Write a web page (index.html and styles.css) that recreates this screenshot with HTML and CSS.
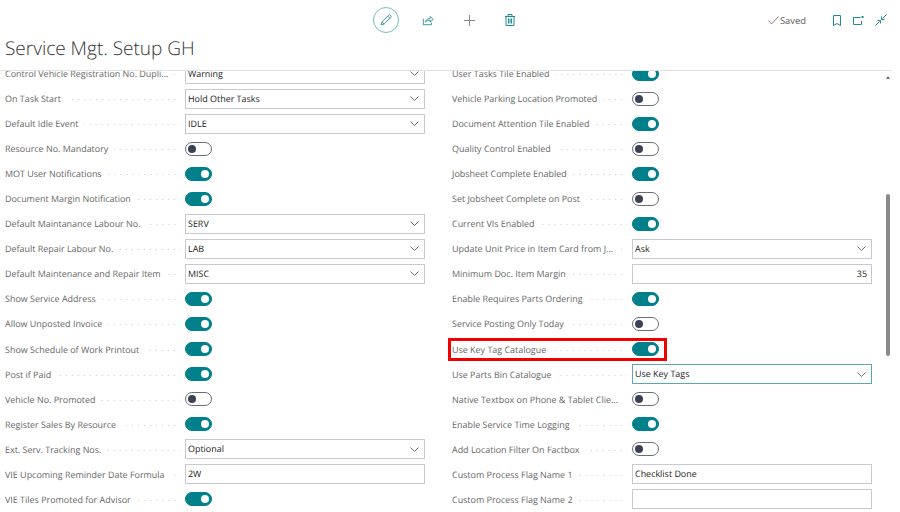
FILE: index.html
```html
<!DOCTYPE html>
<html lang="en">
<head>
<meta charset="utf-8">
<title>Service Mgt. Setup GH</title>
<link rel="stylesheet" href="styles.css">
</head>
<body>
<div class="page">
  <div class="actions">
    <div class="actions-center">
      <button class="edit-btn"><svg width="14" height="14" viewBox="0 0 16 16" class="ic"><path d="M2.5 13.5l.9-3.4 7.6-7.6a1.4 1.4 0 0 1 2 0l.5.5a1.4 1.4 0 0 1 0 2l-7.600 7.600zM3.400 10.100l2.500 2.500M10 3.500l2.500 2.500"/></svg></button>
      <svg width="12" height="12" viewBox="0 0 14 14" class="ic"><path d="M1.500 5.500v7h9.500v-2.500M4 9.500c.5-2.500 2.500-4.200 5.500-4.200V3l3.500 3.200-3.500 3.200V7.200c-2 0-4 .8-5.500 2.300z"/></svg>
      <svg width="11" height="11" viewBox="0 0 11 11" class="ic-grey"><path d="M5.500 0v11M0 5.500h11"/></svg>
      <svg width="10" height="12" viewBox="0 0 10 12" class="ic"><path d="M0 2.500h10M3 2.500V.5h4v2M1 2.500v9h8v-9M3.500 4.500v5M5 4.500v5M6.500 4.500v5"/></svg>
    </div>
    <div class="actions-right">
      <span class="saved"><svg width="11" height="9" viewBox="0 0 11 9" class="ic-grey"><path d="M.5 4.500l3 3.500 7-7.500"/></svg>Saved</span>
      <svg width="8" height="11" viewBox="0 0 8 11" class="ic"><path d="M.5.5h7v10L4 8.500.5 10.500z"/></svg>
      <svg width="11" height="9" viewBox="0 0 11 9" class="ic"><path d="M7.500 1.500H.5v7h8V5"/><path class="fill" d="M8.500 0h2v2h-2z"/></svg>
      <svg width="12" height="12" viewBox="0 0 12 12" class="ic"><path d="M.5 11.500l4-4M7.500 4.500l4-4M2.500 6.500h3v3M6.500 2.500v3h3"/></svg>
    </div>
  </div>
  <h1 class="title">Service Mgt. Setup GH</h1>
  <main class="scroller">
    <div class="form">
      <div class="col">
        <div class="row"><div class="caption"><span class="label">Control Vehicle Registration No. Dupli...</span><i class="dots"></i></div><div class="field select">Warning</div></div>
        <div class="row"><div class="caption"><span class="label">On Task Start</span><i class="dots"></i></div><div class="field select">Hold Other Tasks</div></div>
        <div class="row"><div class="caption"><span class="label">Default Idle Event</span><i class="dots"></i></div><div class="field select">IDLE</div></div>
        <div class="row"><div class="caption"><span class="label">Resource No. Mandatory</span><i class="dots"></i></div><span class="toggle"></span></div>
        <div class="row"><div class="caption"><span class="label">MOT User Notifications</span><i class="dots"></i></div><span class="toggle on"></span></div>
        <div class="row"><div class="caption"><span class="label">Document Margin Notification</span><i class="dots"></i></div><span class="toggle on"></span></div>
        <div class="row"><div class="caption"><span class="label">Default Maintanance Labour No.</span><i class="dots"></i></div><div class="field select">SERV</div></div>
        <div class="row"><div class="caption"><span class="label">Default Repair Labour No.</span><i class="dots"></i></div><div class="field select">LAB</div></div>
        <div class="row"><div class="caption"><span class="label">Default Maintenance and Repair Item</span><i class="dots"></i></div><div class="field select">MISC</div></div>
        <div class="row"><div class="caption"><span class="label">Show Service Address</span><i class="dots"></i></div><span class="toggle on"></span></div>
        <div class="row"><div class="caption"><span class="label">Allow Unposted Invoice</span><i class="dots"></i></div><span class="toggle on"></span></div>
        <div class="row"><div class="caption"><span class="label">Show Schedule of Work Printout</span><i class="dots"></i></div><span class="toggle on"></span></div>
        <div class="row"><div class="caption"><span class="label">Post if Paid</span><i class="dots"></i></div><span class="toggle on"></span></div>
        <div class="row"><div class="caption"><span class="label">Vehicle No. Promoted</span><i class="dots"></i></div><span class="toggle"></span></div>
        <div class="row"><div class="caption"><span class="label">Register Sales By Resource</span><i class="dots"></i></div><span class="toggle on"></span></div>
        <div class="row"><div class="caption"><span class="label">Ext. Serv. Tracking Nos.</span><i class="dots"></i></div><div class="field select">Optional</div></div>
        <div class="row"><div class="caption"><span class="label">VIE Upcoming Reminder Date Formula</span><i class="dots"></i></div><div class="field">2W</div></div>
        <div class="row"><div class="caption"><span class="label">VIE Tiles Promoted for Advisor</span><i class="dots"></i></div><span class="toggle on"></span></div>
      </div>
      <div class="col">
        <div class="row"><div class="caption"><span class="label">User Tasks Tile Enabled</span><i class="dots"></i></div><span class="toggle on"></span></div>
        <div class="row"><div class="caption"><span class="label">Vehicle Parking Location Promoted</span><i class="dots"></i></div><span class="toggle"></span></div>
        <div class="row"><div class="caption"><span class="label">Document Attention Tile Enabled</span><i class="dots"></i></div><span class="toggle on"></span></div>
        <div class="row"><div class="caption"><span class="label">Quality Control Enabled</span><i class="dots"></i></div><span class="toggle"></span></div>
        <div class="row"><div class="caption"><span class="label">Jobsheet Complete Enabled</span><i class="dots"></i></div><span class="toggle on"></span></div>
        <div class="row"><div class="caption"><span class="label">Set Jobsheet Complete on Post</span><i class="dots"></i></div><span class="toggle"></span></div>
        <div class="row"><div class="caption"><span class="label">Current VIs Enabled</span><i class="dots"></i></div><span class="toggle on"></span></div>
        <div class="row"><div class="caption"><span class="label">Update Unit Price in Item Card from J...</span><i class="dots"></i></div><div class="field select">Ask</div></div>
        <div class="row"><div class="caption"><span class="label">Minimum Doc. Item Margin</span><i class="dots"></i></div><div class="field num">35</div></div>
        <div class="row"><div class="caption"><span class="label">Enable Requires Parts Ordering</span><i class="dots"></i></div><span class="toggle on"></span></div>
        <div class="row"><div class="caption"><span class="label">Service Posting Only Today</span><i class="dots"></i></div><span class="toggle"></span></div>
        <div class="row highlighted"><div class="caption"><span class="label">Use Key Tag Catalogue</span><i class="dots"></i></div><span class="toggle on"></span></div>
        <div class="row"><div class="caption"><span class="label">Use Parts Bin Catalogue</span><i class="dots"></i></div><div class="field select focus">Use Key Tags</div></div>
        <div class="row"><div class="caption"><span class="label">Native Textbox on Phone &amp; Tablet Clie...</span><i class="dots"></i></div><span class="toggle"></span></div>
        <div class="row"><div class="caption"><span class="label">Enable Service Time Logging</span><i class="dots"></i></div><span class="toggle on"></span></div>
        <div class="row"><div class="caption"><span class="label">Add Location Filter On Factbox</span><i class="dots"></i></div><span class="toggle"></span></div>
        <div class="row"><div class="caption"><span class="label">Custom Process Flag Name 1</span><i class="dots"></i></div><div class="field">Checklist Done</div></div>
        <div class="row"><div class="caption"><span class="label">Custom Process Flag Name 2</span><i class="dots"></i></div><div class="field"></div></div>
      </div>
    </div>
    <div class="scroll-arrow"></div>
    <div class="scrollbar"></div>
  </main>
</div>
</body>
</html>
```
FILE: styles.css
```css
* { box-sizing: border-box; }
html, body { margin: 0; height: 100%; overflow: hidden; background: #fff; }
body { font-family: "Open Sans", "Noto Sans", sans-serif; font-size: 8.95px; color: #212121; text-rendering: geometricPrecision; }
.page { height: 512px; width: 900px; display: flex; flex-direction: column; }

.actions { position: relative; height: 35px; padding-top: 7px; display: flex; justify-content: flex-end; }
.actions-center { position: absolute; left: 373px; top: 7px; display: flex; align-items: center; gap: 30px; height: 26px; }
.edit-btn { width: 26px; height: 26px; padding: 0; border: 1px solid #6fbdc2; border-radius: 50%; background: #fff; display: flex; align-items: center; justify-content: center; margin-right: -7px; }
.ic { fill: none; stroke: #1f8a92; stroke-width: 1; display: block; }
.ic .fill { fill: #1f8a92; stroke: none; }
.ic-grey { fill: none; stroke: #8a8886; stroke-width: 1; display: block; }
.actions-right { display: flex; align-items: center; height: 26px; padding-right: 13px; gap: 11.5px; }
.saved { display: flex; align-items: center; gap: 1px; font-size: 9.4px; color: #605e5c; margin-right: 15.5px; }

.title { margin: 0; padding-left: 5px; font-size: 19px; line-height: 26px; height: 35px; font-weight: 300; color: #333; }

.scroller { position: relative; flex: 1; overflow: hidden; width: 892px; border-top: 1px solid #e1e1e1; }
.form { display: grid; grid-template-columns: 447px 440px; margin-top: -10px; }
.col { padding-left: 5px; }
.row { position: relative; display: flex; align-items: center; height: 25.06px; }
.caption { flex: none; width: 180px; padding-right: 5px; display: flex; align-items: center; min-width: 0; }
.label { flex: none; white-space: nowrap; color: #666; }
.dots { flex: 1; min-width: 0; height: 1px; margin: 2px 0 0 6px; background-image: linear-gradient(90deg, #c8c8c8 1px, transparent 1px); background-size: 6px 1px; background-position: right; }
.field { position: relative; flex: none; width: 240px; height: 20px; padding: 0 6px 0 2px; border: 1px solid #c8c8d0; line-height: 18px; color: #212121; background: #fff; }
.field.num { text-align: right; padding-right: 4px; }
.field.focus { border-color: #5ba8ad; }
.select { background: #fff url("data:image/svg+xml,%3Csvg xmlns='http://www.w3.org/2000/svg' width='9' height='5'%3E%3Cpath d='M.5.5l4 4 4-4' fill='none' stroke='%23707070'/%3E%3C/svg%3E") no-repeat right 5px center; }
.toggle { position: relative; flex: none; display: block; width: 27px; height: 14px; border: 1px solid #6a6d75; border-radius: 7px; background: #fff; }
.toggle::after { content: ""; position: absolute; left: 2px; top: 2px; width: 8px; height: 8px; border-radius: 50%; background: #3a4256; }
.toggle.on { background: #00808a; border-color: #00808a; }
.toggle.on::after { left: auto; right: 2px; background: #fff; }
.highlighted::after { content: ""; position: absolute; box-sizing: border-box; left: -4px; top: 1px; width: 219px; height: 23px; border: 3px solid #f00000; }
.scroll-arrow { position: absolute; left: 886px; top: 5px; width: 0; height: 0; border-left: 2.5px solid transparent; border-right: 2.5px solid transparent; border-bottom: 3px solid #6a6a6a; }
.scrollbar { position: absolute; left: 886px; top: 123px; width: 4px; height: 162px; border-radius: 2px; background: #8a8a8a; }
```
